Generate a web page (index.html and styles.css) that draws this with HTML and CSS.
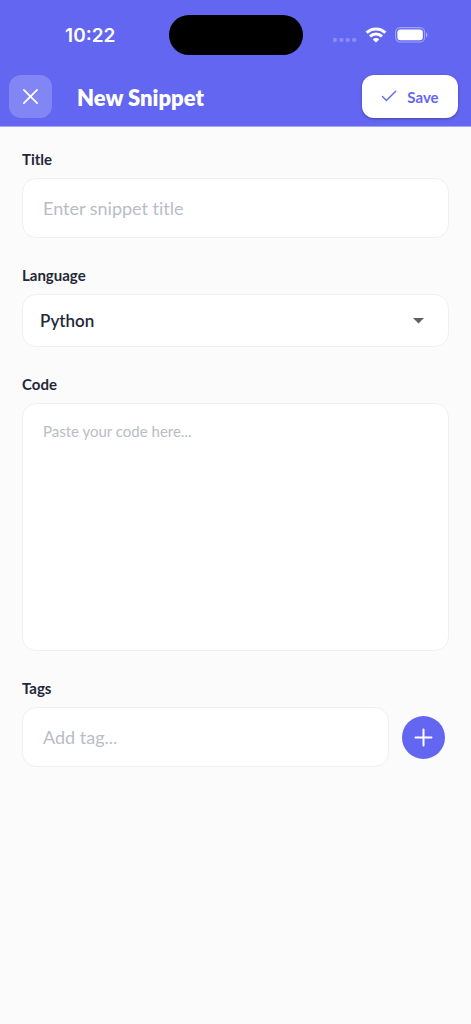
FILE: index.html
```html
<!DOCTYPE html>
<html lang="en">
<head>
<meta charset="utf-8">
<meta name="viewport" content="width=device-width, initial-scale=1">
<title>New Snippet</title>
<link rel="stylesheet" href="styles.css">
</head>
<body>
<header class="app-header">
  <div class="status-bar">
    <time class="clock">10:22</time>
    <div class="island"></div>
    <div class="indicators">
      <svg class="signal" width="24" height="16" viewBox="0 0 24 16" fill="#fff" fill-opacity=".25" aria-hidden="true"><rect x="0" y="11" width="4" height="4" rx="1.4"/><rect x="6.4" y="11" width="4" height="4" rx="1.4"/><rect x="12.8" y="11" width="4" height="4" rx="1.4"/><rect x="19.2" y="11" width="4" height="4" rx="1.4"/></svg>
      <svg class="wifi" width="22" height="16" viewBox="0 0 22 16" aria-hidden="true"><g fill="none" stroke="#fff" stroke-width="3"><path d="M1.6 5.7a13.5 13.5 0 0 1 18.8 0"/><path d="M5 9.3a8.7 8.7 0 0 1 12 0"/></g><path fill="#fff" d="M11 15.6 7.8 12.4a4.6 4.6 0 0 1 6.4 0z"/></svg>
      <svg class="battery" width="33" height="16" viewBox="0 0 33 16" aria-hidden="true"><rect x=".6" y=".6" width="29" height="14.4" rx="4.6" fill="none" stroke="#fff" stroke-opacity=".4" stroke-width="1.1"/><rect x="2.4" y="2.4" width="25.4" height="10.8" rx="3" fill="#fff"/><path d="M31 5.4c2 .8 2 4 0 4.8z" fill="#fff" fill-opacity=".45"/></svg>
    </div>
  </div>
  <div class="toolbar">
    <button class="close-button" type="button" aria-label="Close"><svg width="17" height="17" viewBox="0 0 18 18" fill="none" stroke="#fff" stroke-width="1.9" stroke-linecap="round" aria-hidden="true"><path d="m2 2 14 14M16 2 2 16"/></svg></button>
    <h1 class="page-title">New Snippet</h1>
    <button class="save-button" type="submit" form="snippet-form"><svg width="16" height="14" viewBox="0 0 16 14" fill="none" stroke="currentColor" stroke-width="1.4" stroke-linecap="round" stroke-linejoin="round" aria-hidden="true"><path d="m1.5 6.5 3.9 3.9L14.7 1.2"/></svg><span>Save</span></button>
  </div>
</header>
<main>
  <form class="snippet-form" id="snippet-form">
    <div class="field">
      <label for="title">Title</label>
      <input class="control" id="title" type="text" placeholder="Enter snippet title">
    </div>
    <div class="field">
      <label for="language">Language</label>
      <div class="select-box">
        <select class="control" id="language"><option>Python</option></select>
        <svg class="caret" width="11" height="6" viewBox="0 0 11 6" fill="#616161" aria-hidden="true"><path d="M0 0h11L5.5 5.5z"/></svg>
      </div>
    </div>
    <div class="field">
      <label for="code">Code</label>
      <textarea class="control" id="code" rows="10" placeholder="Paste your code here..."></textarea>
    </div>
    <div class="field">
      <label for="tag">Tags</label>
      <div class="tag-row">
        <input class="control" id="tag" type="text" placeholder="Add tag...">
        <button class="add-button" type="button" aria-label="Add tag"><svg width="19" height="19" viewBox="0 0 19 19" fill="none" stroke="#fff" stroke-width="2" stroke-linecap="round" aria-hidden="true"><path d="M9.5 1.5v16M1.5 9.5h16"/></svg></button>
      </div>
    </div>
  </form>
</main>
</body>
</html>
```
FILE: styles.css
```css
* { box-sizing: border-box; }

body {
  margin: 0;
  min-height: 100vh;
  background: #fbfbfb;
  color: #1f2937;
  font-family: Lato, "Open Sans", sans-serif;
  font-variant-ligatures: none;
}

button, input, select, textarea {
  font-family: inherit;
  font-variant-ligatures: none;
}

button {
  display: flex;
  align-items: center;
  justify-content: center;
  padding: 0;
  border: 0;
  cursor: pointer;
}

svg { display: block; flex: none; }

.app-header {
  background: #6366f1;
  border-bottom: 1px solid #a3a5f6;
  color: #fff;
}

.status-bar {
  display: grid;
  grid-template-columns: 1fr 134px 1fr;
  align-items: center;
  height: 69px;
}

.clock {
  padding: 2px 0 0 12px;
  font: 600 19px/24px Inter, sans-serif;
  text-align: center;
}

.island {
  height: 40px;
  border-radius: 20px;
  background: #000;
}

.indicators {
  display: flex;
  justify-content: center;
  gap: 8px;
  padding-right: 12px;
}

.toolbar {
  display: flex;
  align-items: center;
  padding: 6px 13px 8px 9px;
}

.close-button {
  width: 43px;
  height: 43px;
  border-radius: 12px;
  background: #8285f4;
}

.page-title {
  flex: 1;
  margin: 0 0 0 25px;
  padding-top: 2px;
  font-size: 22px;
  line-height: 28px;
  font-weight: 800;
}

.save-button {
  gap: 10px;
  width: 96px;
  height: 43px;
  border-radius: 12px;
  background: #fff;
  box-shadow: 0 1px 3px rgba(0, 0, 0, .3);
  color: #6366f1;
  font-size: 15px;
  font-weight: 700;
}

.snippet-form {
  display: flex;
  flex-direction: column;
  gap: 27px;
  padding: 22px;
}

.field {
  display: flex;
  flex-direction: column;
  gap: 9px;
}

.field label {
  font-size: 15px;
  line-height: 20px;
  font-weight: 700;
}

.control {
  display: block;
  width: 100%;
  margin: 0;
  padding: 17px 20px;
  border: 1px solid #f0f0f1;
  border-radius: 14px;
  background: #fff;
  color: #1f2937;
  font-size: 18px;
  line-height: 24px;
}

.control::placeholder {
  color: #b8bdc6;
  opacity: 1;
}

input.control { height: 60px; }

.select-box {
  display: grid;
  align-items: center;
}

.select-box > * { grid-area: 1 / 1; }

select.control {
  height: 53px;
  padding: 0 17px;
  appearance: none;
  font-size: 17px;
  font-weight: 600;
}

.caret {
  justify-self: end;
  margin-right: 25px;
  pointer-events: none;
}

textarea.control {
  height: 248px;
  resize: none;
  font-size: 15px;
  line-height: 20px;
}

.tag-row {
  display: flex;
  align-items: center;
  gap: 13px;
  padding-right: 4px;
}

.tag-row .control { flex: 1; min-width: 0; }

.add-button {
  flex: none;
  width: 43px;
  height: 43px;
  border-radius: 50%;
  background: #6366f1;
}
```
